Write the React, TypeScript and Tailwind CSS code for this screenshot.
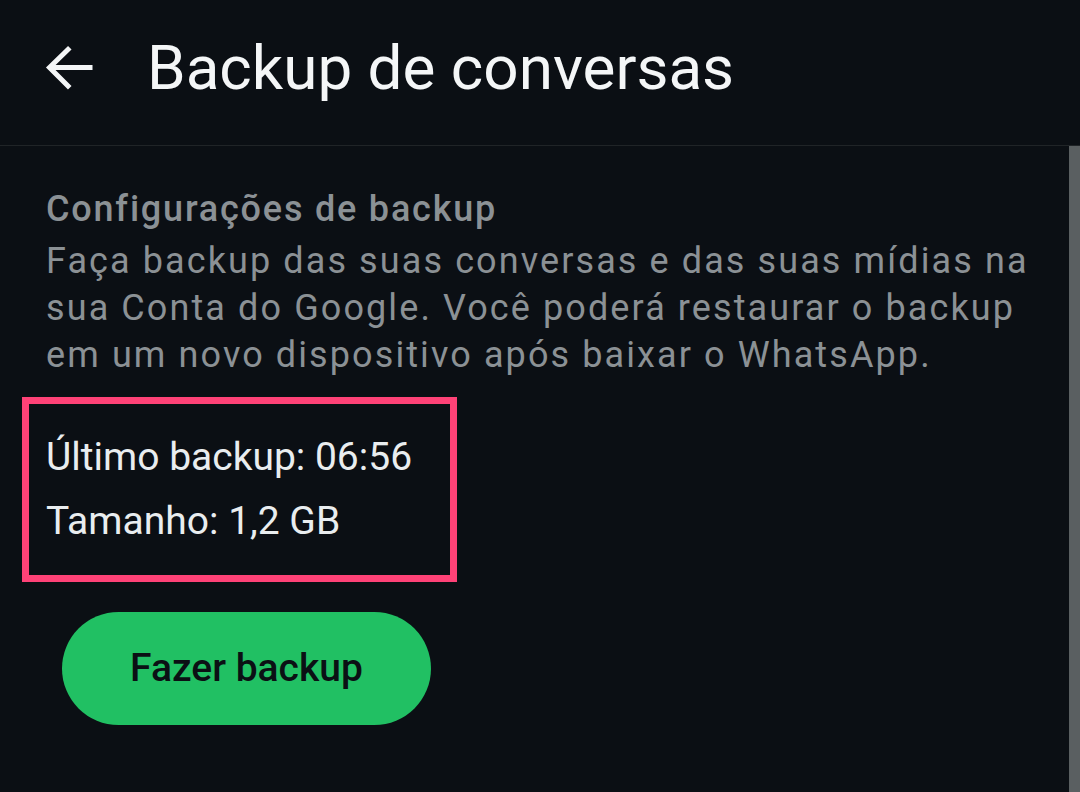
const BackIcon = () => (
  <svg width="50" height="50" viewBox="0 0 50 50" fill="none">
    <path
      d="M46 22.5H8M24 4.5L5.5 22.5L24 41"
      stroke="#f4f6f7"
      strokeWidth="5"
      strokeLinecap="square"
    />
  </svg>
);

const App = () => {
  return (
    <div
      className="w-[1080px] h-[792px] overflow-hidden bg-[#0b0f14] flex flex-col"
      style={{ fontFamily: "Roboto, 'Noto Sans', sans-serif" }}
    >
      <header className="h-[146px] shrink-0 flex items-center border-b border-[#202427]">
        <div className="ml-[44px] mt-[-6px] flex items-center">
          <BackIcon />
        </div>
        <h1 className="ml-[53px] mt-[-10px] text-[62px] leading-none text-[#f4f6f7]">
          Backup de conversas
        </h1>
      </header>

      <div className="flex flex-1">
        <main className="flex-1 pt-[38px]">
          <section className="pl-[46px] pr-[24px]">
            <h2 className="text-[36px] leading-[50px] font-medium text-[#8b9195] tracking-[1.8px]">
              Configurações de backup
            </h2>
            <p className="mt-[4px] text-[36px] leading-[47px] text-[#8b9195] tracking-[2.1px]">
              Faça backup das suas conversas e das suas mídias na sua Conta do
              Google. Você poderá restaurar o backup em um novo dispositivo após
              baixar o WhatsApp.
            </p>
          </section>

          <div className="ml-[22px] mt-[18px] w-[435px] h-[185px] border-[7px] border-[#ff4277] pl-[17px] pt-[21px]">
            <p className="text-[39px] leading-[64px] text-[#e9edef]">
              Último backup: 06:56
            </p>
            <p className="text-[39px] leading-[64px] text-[#e9edef]">
              Tamanho: 1,2 GB
            </p>
          </div>

          <button className="ml-[62px] mt-[30px] w-[369px] h-[113px] rounded-full bg-[#21c063] text-[39px] font-medium text-[#0b1014]">
            Fazer backup
          </button>
        </main>
        <div className="w-[11px] bg-[#5a5f61]" />
      </div>
    </div>
  );
};

export default App;
